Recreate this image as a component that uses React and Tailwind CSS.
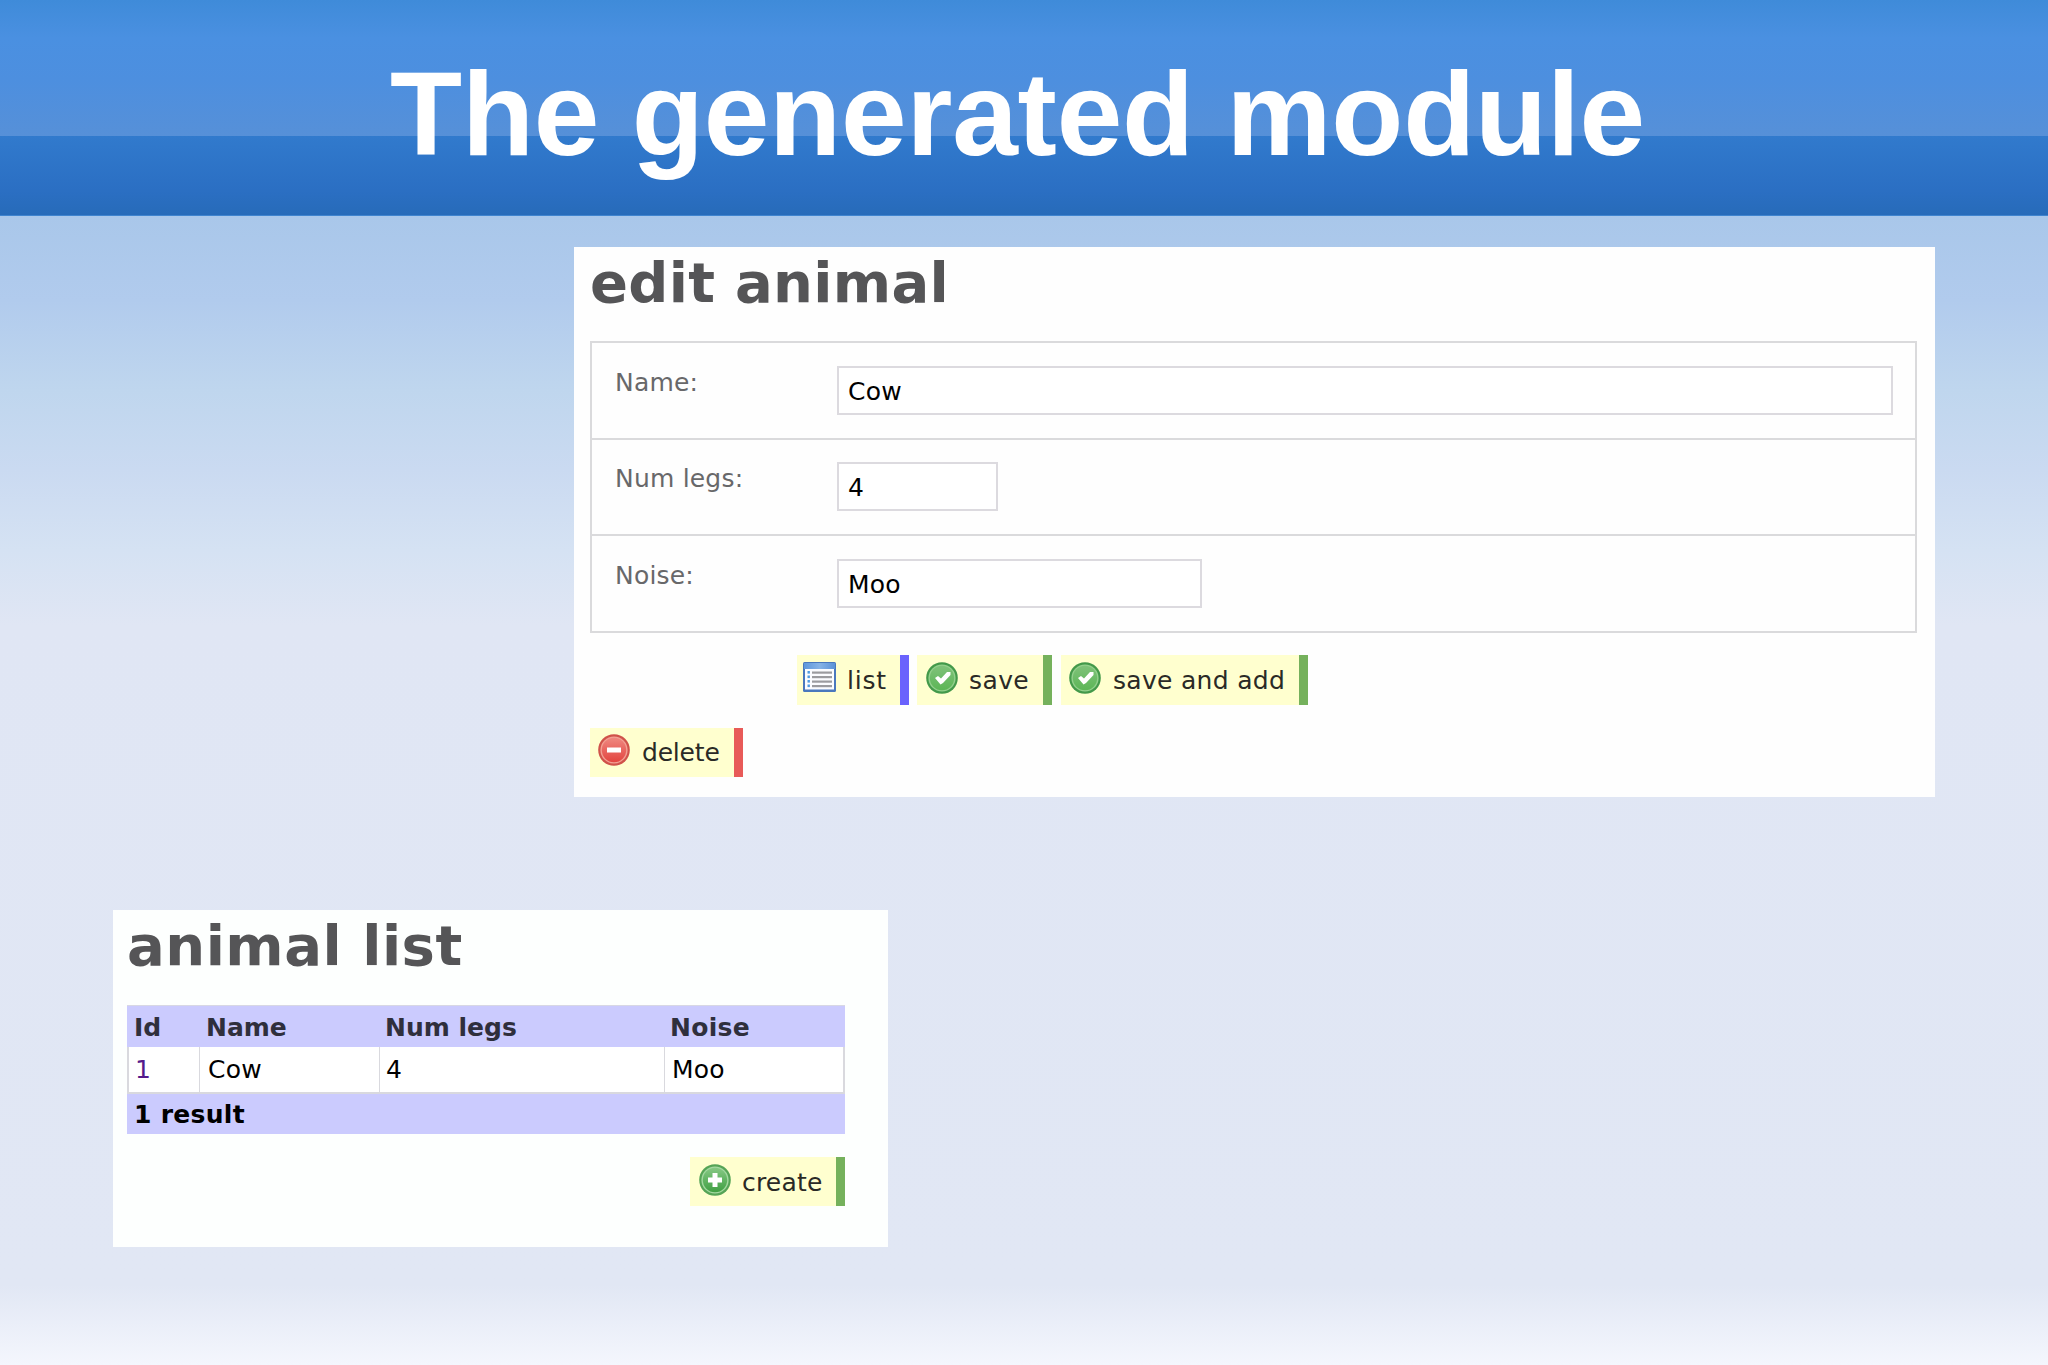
const BUTTON_BORDERS = {
  blue: 'border-[#6a62fd]',
  green: 'border-[#75b15c]',
  red: 'border-[#e85a58]',
};

const FIELDS = [
  { label: 'Name:', value: 'Cow', row: 'h-[97px] pt-[23px]', input: 'w-[1056px]' },
  { label: 'Num legs:', value: '4', row: 'h-[96px] pt-[22px]', input: 'w-[161px]' },
  { label: 'Noise:', value: 'Moo', row: 'h-[97px] pt-[23px]', input: 'w-[365px]' },
];

function ListIcon() {
  return (
    <svg viewBox="0 0 33 30" className="w-[33px] h-[30px]">
      <defs>
        <linearGradient id="listBar" x1="0" y1="0" x2="1" y2="0">
          <stop offset="0" stopColor="#5f97dc" />
          <stop offset="0.5" stopColor="#86b3e6" />
          <stop offset="1" stopColor="#5b92d8" />
        </linearGradient>
      </defs>
      <rect width="33" height="30" rx="1.5" fill="#4a78bd" />
      <rect x="1" y="1" width="31" height="6" fill="url(#listBar)" />
      <rect x="2" y="7" width="29" height="20.5" fill="#fbfcff" />
      {[9.5, 14, 18.5, 23].map(y => (
        <g key={y}>
          <rect x="4.5" y={y - 0.5} width="2.4" height="2.6" fill="#4f9be0" />
          <rect x="9" y={y} width="20" height="2.2" fill="#9b9b9f" />
        </g>
      ))}
    </svg>
  );
}

function RoundIcon({ id, edge, ring, top, bottom, children }) {
  return (
    <svg viewBox="0 0 32 32" className="w-8 h-8">
      <defs>
        <linearGradient id={id} x1="0" y1="0" x2="0" y2="1">
          <stop offset="0" stopColor={top} />
          <stop offset="1" stopColor={bottom} />
        </linearGradient>
      </defs>
      <circle cx="16" cy="16" r="15.8" fill={edge} />
      <circle cx="16" cy="16" r="13.6" fill={ring} />
      <circle cx="16" cy="16" r="12.2" fill={`url(#${id})`} />
      {children}
    </svg>
  );
}

function CheckIcon({ id }) {
  return (
    <RoundIcon id={id} edge="#43994a" ring="#93d08c" top="#7fc27a" bottom="#5cb656">
      <path d="M9 16l3-2 3 2.5 6-6.5h3.500v3L17 21l-2.500 1.500z" fill="#fff" />
    </RoundIcon>
  );
}

function DeleteIcon() {
  return (
    <RoundIcon id="deleteFill" edge="#d0524a" ring="#f2a093" top="#ef8880" bottom="#e3443f">
      <rect x="9" y="13.5" width="14" height="5" fill="#fff" />
    </RoundIcon>
  );
}

function CreateIcon() {
  return (
    <RoundIcon id="createFill" edge="#55a456" ring="#a3d8a0" top="#86c884" bottom="#3f9f42">
      <path d="M13.5 9h5v4.5H23v5h-4.5V23h-5v-4.5H9v-5h4.5z" fill="#fff" />
    </RoundIcon>
  );
}

function ActionButton({ icon, color, size, iconPos = 'mt-[7px] ml-[9px] w-[43px]', textPos = 'mt-[11px]', children }) {
  return (
    <button className={`flex items-start border-r-[9px] bg-[#ffffcf] text-[25px] leading-[30px] text-[#2a2a26] whitespace-nowrap ${BUTTON_BORDERS[color]} ${size}`}>
      <span className={`shrink-0 ${iconPos}`}>{icon}</span>
      <span className={textPos}>{children}</span>
    </button>
  );
}

function EditAnimal() {
  return (
    <section className="ml-[574px] mt-[31px] w-[1361px] h-[550px] bg-[#fefefe] pt-[3px] pl-[16px]">
      <h2 className="text-[56px] leading-[66px] font-bold tracking-[0.3px] text-[#555557]">edit animal</h2>

      <form className="mt-[25px] w-[1327px] border-2 border-b-0 border-[#dadadc]">
        {FIELDS.map(f => (
          <div key={f.label} className={`flex items-start pl-[23px] border-b-2 border-[#dadadc] ${f.row}`}>
            <label className="mt-[2px] w-[222px] text-[25px] leading-[30px] tracking-[0.2px] text-[#68686a]">{f.label}</label>
            <input
              defaultValue={f.value}
              className={`h-[49px] border-2 border-[#dcdadf] bg-white pt-[2px] px-[9px] text-[25px] tracking-[0.2px] text-black ${f.input}`}
            />
          </div>
        ))}
      </form>

      <div className="mt-[22px] ml-[207px] flex">
        <ActionButton icon={<ListIcon />} color="blue" size="w-[112px] h-[50px]" iconPos="mt-[7px] ml-[6px] w-[44px]" textPos="mt-[11px] tracking-[0.8px]">list</ActionButton>
        <div className="ml-2">
          <ActionButton icon={<CheckIcon id="saveFill" />} color="green" size="w-[135px] h-[50px]" textPos="mt-[11px] tracking-[0.4px]">save</ActionButton>
        </div>
        <div className="ml-[9px]">
          <ActionButton icon={<CheckIcon id="saveAddFill" />} color="green" size="w-[247px] h-[50px]" iconPos="mt-[7px] ml-[8px] w-[44px]" textPos="mt-[11px] tracking-[0.3px]">save and add</ActionButton>
        </div>
      </div>
      <div className="mt-[23px]">
        <ActionButton icon={<DeleteIcon />} color="red" size="w-[153px] h-[49px]" iconPos="mt-[6px] ml-[8px] w-[44px]" textPos="mt-[10px] tracking-[-0.2px]">delete</ActionButton>
      </div>
    </section>
  );
}

function AnimalList() {
  return (
    <section className="ml-[113px] mt-[113px] w-[775px] h-[337px] bg-[#fdfffe] pt-[3px] pl-[14px]">
      <h2 className="text-[56px] leading-[66px] font-bold tracking-[0.5px] text-[#555557]">animal list</h2>

      <div className="mt-[26px] w-[718px] text-[25px] leading-[30px]">
        <div className="grid grid-cols-[72px_180px_285px_181px] h-[42px] pt-[7px] bg-[#cbcbfe] border-t border-[#d8d8e4] font-bold text-[#2f2f3c]">
          <span className="pl-[7px]">Id</span>
          <span className="pl-[7px]">Name</span>
          <span className="pl-[6px]">Num legs</span>
          <span className="pl-[6px] tracking-[0.3px]">Noise</span>
        </div>
        <div className="grid grid-cols-[71px_180px_285px_180px] h-[47px] bg-white border-l-2 border-b-2 border-[#d9d9de] text-black tracking-[0.2px]">
          <span className="pt-[8px] pl-[6px] border-r border-[#d9d9de] text-[#551a8b]">1</span>
          <span className="pt-[8px] pl-[8px] border-r border-[#d9d9de]">Cow</span>
          <span className="pt-[8px] pl-[6px] border-r border-[#d9d9de]">4</span>
          <span className="pt-[8px] pl-[7px] border-r-2 border-[#d9d9de]">Moo</span>
        </div>
        <div className="h-[40px] pt-[6px] pl-[7px] bg-[#cbcbfe] font-bold tracking-[0.3px] text-black">1 result</div>
      </div>

      <div className="mt-[23px] w-[718px] flex justify-end">
        <ActionButton icon={<CreateIcon />} color="green" size="w-[155px] h-[49px]" textPos="mt-[11px] tracking-[0.2px]">create</ActionButton>
      </div>
    </section>
  );
}

export default function App() {
  return (
    <div className="w-[2048px] h-[1365px] overflow-hidden font-['DejaVu_Sans',sans-serif] bg-[linear-gradient(to_bottom,#a9c7ea_216px,#b1cbed_300px,#bfd6ee_390px,#cadaf1_470px,#d5e2f3_550px,#e0e6f4_625px,#e1e7f4_1285px,#f4f6fd_1365px)]">
      {/* Slide title bar */}
      <header className="h-[216px] pt-[47px] border-b border-[#3f84cf] text-center bg-[linear-gradient(to_bottom,#3f8bd9_0px,#4a90e1_38px,#4d8fdf_80px,#5690d8_136px,#317acd_136px,#2b6fc3_190px,#276bb9_215px)]">
        <h1 className="pr-[13px] font-['Liberation_Sans',sans-serif] font-bold text-[118px] leading-[134px] tracking-[-0.2px] text-white">The generated module</h1>
      </header>
      <EditAnimal />
      <AnimalList />
    </div>
  );
}
